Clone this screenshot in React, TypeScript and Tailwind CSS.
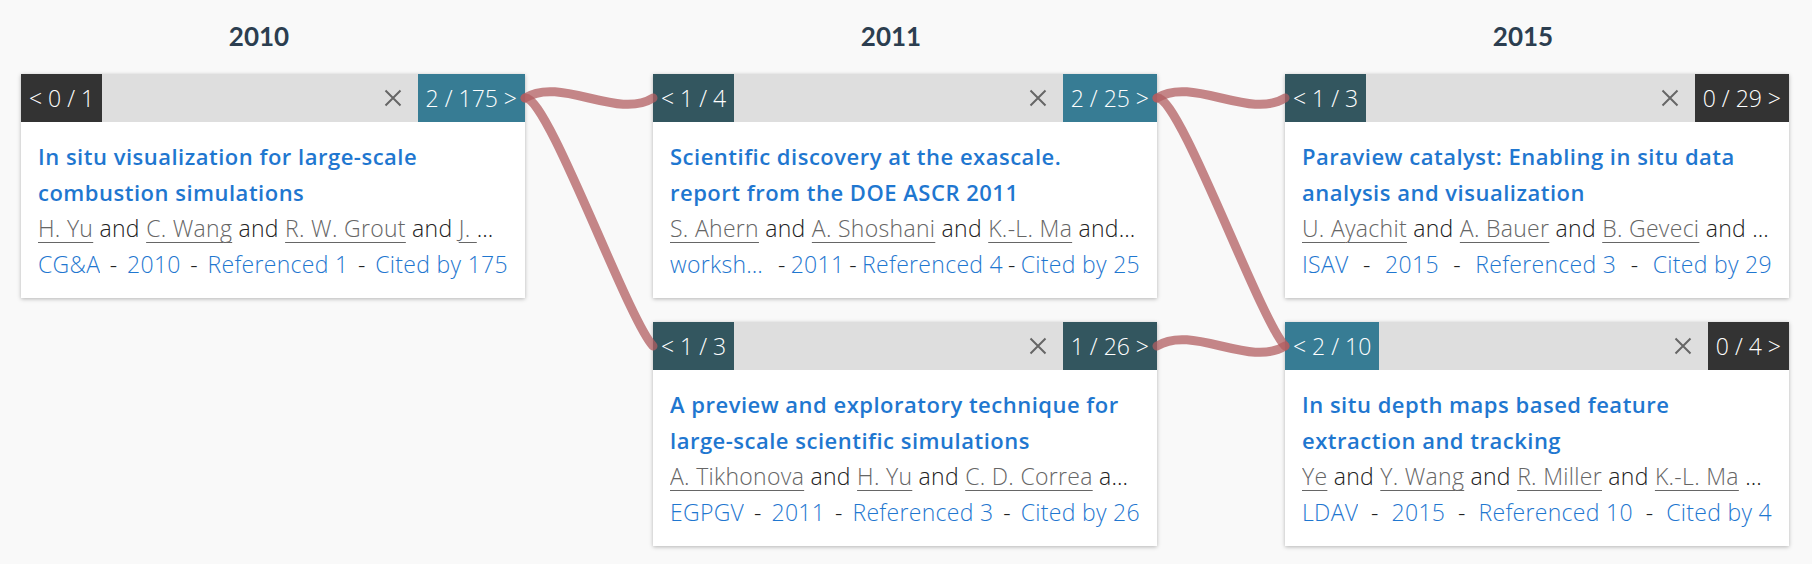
import React from 'react';

type Tone = 'none' | 'one' | 'many';

type Paper = {
  title: string[];
  authors: string[];
  venue: string;
  year: string;
  refs: number;
  cited: number;
  prev: string;
  next: string;
  prevTone: Tone;
  nextTone: Tone;
};

const toneClass: Record<Tone, string> = {
  none: 'bg-[#333333]',
  one: 'bg-[#33565f]',
  many: 'bg-[#377c94]',
};

const columns: { year: string; papers: Paper[] }[] = [
  {
    year: '2010',
    papers: [
      {
        title: ['In situ visualization for large-scale', 'combustion simulations'],
        authors: ['H. Yu', 'C. Wang', 'R. W. Grout', 'J. H. Chen', 'K.-L. Ma'],
        venue: 'CG&A',
        year: '2010',
        refs: 1,
        cited: 175,
        prev: '< 0 / 1',
        next: '2 / 175 >',
        prevTone: 'none',
        nextTone: 'many',
      },
    ],
  },
  {
    year: '2011',
    papers: [
      {
        title: ['Scientific discovery at the exascale.', 'report from the DOE ASCR 2011'],
        authors: ['S. Ahern', 'A. Shoshani', 'K.-L. Ma', 'A. Choudhary'],
        venue: 'workshop on data management, analysis, and visualization',
        year: '2011',
        refs: 4,
        cited: 25,
        prev: '< 1 / 4',
        next: '2 / 25 >',
        prevTone: 'one',
        nextTone: 'many',
      },
      {
        title: ['A preview and exploratory technique for', 'large-scale scientific simulations'],
        authors: ['A. Tikhonova', 'H. Yu', 'C. D. Correa', 'J. H. Chen', 'K.-L. Ma'],
        venue: 'EGPGV',
        year: '2011',
        refs: 3,
        cited: 26,
        prev: '< 1 / 3',
        next: '1 / 26 >',
        prevTone: 'one',
        nextTone: 'one',
      },
    ],
  },
  {
    year: '2015',
    papers: [
      {
        title: ['Paraview catalyst: Enabling in situ data', 'analysis and visualization'],
        authors: ['U. Ayachit', 'A. Bauer', 'B. Geveci', 'P. O\u2019Leary'],
        venue: 'ISAV',
        year: '2015',
        refs: 3,
        cited: 29,
        prev: '< 1 / 3',
        next: '0 / 29 >',
        prevTone: 'one',
        nextTone: 'none',
      },
      {
        title: ['In situ depth maps based feature', 'extraction and tracking'],
        authors: ['Ye', 'Y. Wang', 'R. Miller', 'K.-L. Ma', 'J. H. Chen'],
        venue: 'LDAV',
        year: '2015',
        refs: 10,
        cited: 4,
        prev: '< 2 / 10',
        next: '0 / 4 >',
        prevTone: 'many',
        nextTone: 'none',
      },
    ],
  },
];

const links = [
  'M525 98 C560 76, 618 120, 653 98',
  'M525 98 C547 94, 627 318, 653 346',
  'M1157 98 C1192 76, 1250 120, 1285 98',
  'M1157 98 C1179 94, 1259 318, 1285 346',
  'M1157 346 C1192 324, 1250 368, 1285 346',
];

const PaperCard: React.FC<{ paper: Paper }> = ({ paper }) => {
  return (
    <div className="h-[224px] w-[504px] bg-white shadow-[0_1px_4px_rgba(0,0,0,0.28)]">
      <div className="flex h-12 items-stretch bg-[#dedede] text-[23px] font-light text-white">
        <div className={`flex items-center px-[8px] ${toneClass[paper.prevTone]}`}>{paper.prev}</div>
        <div className="flex flex-1 items-center justify-end pr-4">
          <svg width="18" height="18" viewBox="0 0 18 18">
            <path d="M1.5 1.5 L16.5 16.5 M16.5 1.5 L1.5 16.5" stroke="#666666" strokeWidth="2" />
          </svg>
        </div>
        <div className={`flex items-center px-[8px] ${toneClass[paper.nextTone]}`}>{paper.next}</div>
      </div>
      <div className="px-[17px] py-4 text-[23px] leading-[36px]">
        {paper.title.map((line) => (
          <div key={line} className="truncate text-[22px] font-semibold tracking-[0.5px] text-[#1f77d0]">
            {line}
          </div>
        ))}
        <div className="truncate font-light tracking-[0.3px] text-[#222222]">
          {paper.authors.map((a, i) => (
            <React.Fragment key={a}>
              {i > 0 && ' and '}
              <span className="text-[#666666] underline decoration-1 underline-offset-[5px]">{a}</span>
            </React.Fragment>
          ))}
        </div>
        <div className="flex justify-between gap-[5px] whitespace-nowrap font-light tracking-[0.3px] text-[#1f77d0]">
          <span className="min-w-0 truncate">{paper.venue}</span>
          <span className="shrink-0 text-[#222222]">-</span>
          <span className="shrink-0">{paper.year}</span>
          <span className="shrink-0 text-[#222222]">-</span>
          <span className="shrink-0">Referenced {paper.refs}</span>
          <span className="shrink-0 text-[#222222]">-</span>
          <span className="shrink-0">Cited by {paper.cited}</span>
        </div>
      </div>
    </div>
  );
};

export default function App() {
  return (
    <div className="relative h-[564px] w-full overflow-hidden bg-[#f9f9f9] font-['Open_Sans',sans-serif]">
      <div className="flex gap-[128px] pl-[21px]">
        {columns.map((col) => (
          <div key={col.year} className="flex w-[504px] flex-col">
            <div className="flex h-[74px] w-[476px] items-center justify-center pb-[2px] font-['Lato',sans-serif] text-[26px] font-bold text-[#2c3e50]">
              {col.year}
            </div>
            <div className="flex flex-col gap-6">
              {col.papers.map((p) => (
                <PaperCard key={p.title[0]} paper={p} />
              ))}
            </div>
          </div>
        ))}
      </div>
      <svg className="pointer-events-none absolute inset-0" width="1812" height="564">
        {links.map((d) => (
          <path key={d} d={d} fill="none" stroke="#b25e60" strokeOpacity="0.75" strokeWidth="9" strokeLinecap="round" />
        ))}
      </svg>
    </div>
  );
}
